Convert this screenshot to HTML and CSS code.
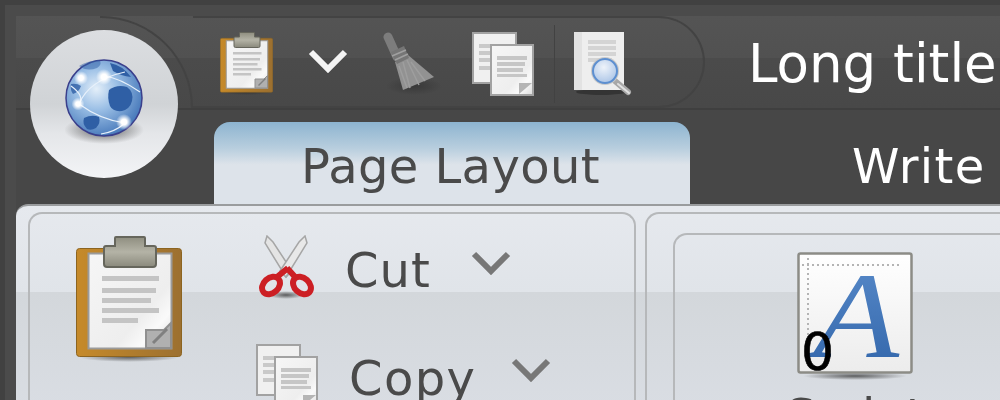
FILE: index.html
```html
<!DOCTYPE html>
<html lang="en">
<head>
  <meta charset="UTF-8">
  <title>Long title</title>
  <link rel="stylesheet" href="styles.css">
</head>
<body>
  <svg class="defs" width="0" height="0">
    <defs>
      <linearGradient id="board" x1="0" y1="0" x2="1" y2="0">
        <stop offset="0" stop-color="#c68a2a"/>
        <stop offset="1" stop-color="#9c7030"/>
      </linearGradient>
      <linearGradient id="paper" x1="0" y1="0" x2="1" y2="1">
        <stop offset="0" stop-color="#f6f6f6"/>
        <stop offset="0.65" stop-color="#eeeeee"/>
        <stop offset="0.8" stop-color="#fafafa"/>
        <stop offset="1" stop-color="#dcdcdc"/>
      </linearGradient>
      <linearGradient id="clip" x1="0" y1="0" x2="0" y2="1">
        <stop offset="0" stop-color="#8f8e80"/>
        <stop offset="0.5" stop-color="#b4b3a6"/>
        <stop offset="1" stop-color="#8a897c"/>
      </linearGradient>
      <linearGradient id="ink" x1="0" y1="0" x2="0" y2="1">
        <stop offset="0" stop-color="#5a8ccb"/>
        <stop offset="1" stop-color="#2f63a8"/>
      </linearGradient>
      <linearGradient id="sheet" x1="0" y1="0" x2="0" y2="1">
        <stop offset="0" stop-color="#ffffff"/>
        <stop offset="1" stop-color="#ececec"/>
      </linearGradient>
      <radialGradient id="sea" cx="0.4" cy="0.38" r="0.68">
        <stop offset="0" stop-color="#e4eff9"/>
        <stop offset="0.4" stop-color="#9cc0e6"/>
        <stop offset="1" stop-color="#3f72b6"/>
      </radialGradient>
      <radialGradient id="drop">
        <stop offset="0" stop-color="#333333" stop-opacity="0.75"/>
        <stop offset="1" stop-color="#333333" stop-opacity="0"/>
      </radialGradient>
      <radialGradient id="lens" cx="0.45" cy="0.35" r="0.7">
        <stop offset="0" stop-color="#eef3fa"/>
        <stop offset="1" stop-color="#a9c3e6"/>
      </radialGradient>
      <radialGradient id="spark">
        <stop offset="0.35" stop-color="#ffffff"/>
        <stop offset="1" stop-color="#ffffff" stop-opacity="0"/>
      </radialGradient>

      <symbol id="i-clipboard" viewBox="0 0 106 126">
        <ellipse cx="53" cy="121" rx="50" ry="5" fill="url(#drop)"/>
        <rect x="0.5" y="12.5" width="105" height="108" rx="3" fill="url(#board)" stroke="#8c6420"/>
        <rect x="12.5" y="17.5" width="83" height="95" fill="url(#paper)" stroke="#9a9a9a" stroke-width="2"/>
        <path d="M39 10V2q0-1 1-1h28q1 0 1 1v8h9q2 0 2 2v16q0 3-3 3H31q-3 0-3-3V12q0-2 2-2z" fill="url(#clip)" stroke="#66665c" stroke-width="2"/>
        <g fill="#c4c4c4">
          <rect x="26" y="40" width="57" height="5"/>
          <rect x="26" y="52" width="54" height="5"/>
          <rect x="26" y="62" width="49" height="5"/>
          <rect x="26" y="72" width="57" height="5"/>
          <rect x="26" y="82" width="36" height="5"/>
        </g>
        <path d="M70 94h18l7-7v25H70z" fill="#b0b0b0" stroke="#909090" stroke-width="2"/>
        <path d="M77 107l14-14" stroke="#808080" stroke-width="3"/>
      </symbol>

      <symbol id="i-copy" viewBox="0 0 62 64">
        <rect x="1" y="1" width="43" height="50" fill="#f0f0f0" stroke="#a2a2a2" stroke-width="2"/>
        <g fill="#c9c9c9">
          <rect x="7" y="12" width="12" height="4"/>
          <rect x="7" y="19" width="12" height="4"/>
          <rect x="7" y="26" width="12" height="4"/>
          <rect x="7" y="34" width="12" height="4"/>
        </g>
        <rect x="19" y="13" width="42" height="50" fill="url(#paper)" stroke="#a2a2a2" stroke-width="2"/>
        <g fill="#c6c6c6">
          <rect x="25" y="24" width="30" height="4"/>
          <rect x="25" y="30" width="28" height="4"/>
          <rect x="25" y="36" width="26" height="4"/>
          <rect x="25" y="42" width="30" height="3"/>
        </g>
        <path d="M47 62V51h13z" fill="#b5b5b5"/>
      </symbol>

      <symbol id="i-broom" viewBox="0 0 60 64">
        <ellipse cx="32" cy="54" rx="28" ry="9" fill="url(#drop)"/>
        <path d="M6 5l9 20" stroke="#7d7d7d" stroke-width="9" stroke-linecap="round"/>
        <path d="M13 30l13-7 26 22-31 13z" fill="#929292"/>
        <path d="M21 30l7 26M25 28l12 25M29 30l14 19M17 34l8 22" stroke="#9e9e9e" stroke-width="1.5"/>
        <path d="M9 20l13-6 5 12-12 6z" fill="#767676"/>
        <path d="M10 24l14-6M13 28l13-6" stroke="#a0a0a0" stroke-width="1.5"/>
      </symbol>

      <symbol id="i-preview" viewBox="0 0 58 64">
        <ellipse cx="27" cy="60" rx="25" ry="3" fill="#2c2c2c" opacity="0.7"/>
        <rect x="0" y="0" width="50" height="58" fill="#eeeeee"/>
        <rect x="0" y="0" width="8" height="58" fill="#e2e2e2"/>
        <g fill="#d4d4d4">
          <rect x="14" y="8" width="28" height="4"/>
          <rect x="14" y="14" width="28" height="4"/>
          <rect x="14" y="20" width="28" height="4"/>
          <rect x="14" y="26" width="24" height="4"/>
        </g>
        <path d="M41 49l13 11" stroke="#a8a8a8" stroke-width="6" stroke-linecap="round"/>
        <path d="M44 52l11 9" stroke="#e0e0e0" stroke-width="2" stroke-linecap="round"/>
        <circle cx="31" cy="39" r="14" fill="#c9c9c9"/>
        <circle cx="31" cy="39" r="12" fill="url(#lens)" stroke="#5d8fd0" stroke-width="2"/>
      </symbol>

      <symbol id="i-scissors" viewBox="0 0 56 64">
        <ellipse cx="27" cy="60" rx="18" ry="4" fill="url(#drop)"/>
        <path d="M8 1l6 6 19 29-6 6L6 8z" fill="#e4e4e4" stroke="#a6a6a6" stroke-width="1.5"/>
        <path d="M46 1l-6 6-19 29 6 6L48 8z" fill="#e8e8e8" stroke="#a6a6a6" stroke-width="1.5"/>
        <g fill="none" stroke="#cc1f24" stroke-width="6">
          <ellipse cx="12" cy="50.5" rx="10" ry="7.5" transform="rotate(-42 12 50.5)"/>
          <ellipse cx="43" cy="50.5" rx="10" ry="7.5" transform="rotate(42 43 50.5)"/>
          <path d="M18 42l11-9M37 43l-9-10"/>
        </g>
      </symbol>
    </defs>
  </svg>

  <div class="window">
    <div class="inner">
      <header class="titlebar">
        <div class="corner"></div>
        <div class="quick">
          <svg class="icon-clipboard-sm"><use href="#i-clipboard"/></svg>
          <svg class="chevron chevron-white" viewBox="0 0 40 24"><path d="M3 3l17 17L37 3"/></svg>
          <svg class="icon-broom"><use href="#i-broom"/></svg>
          <svg class="icon-copy quick-copy"><use href="#i-copy"/></svg>
          <div class="quick-sep"></div>
          <svg class="icon-preview"><use href="#i-preview"/></svg>
        </div>
        <div class="title">Long title</div>
      </header>

      <nav class="tabs">
        <div class="tab active">Page Layout</div>
        <div class="tab">Write</div>
      </nav>

      <main class="ribbon">
        <section class="group group-clipboard">
          <svg class="icon-clipboard"><use href="#i-clipboard"/></svg>
          <div class="actions">
            <div class="action action-cut">
              <svg class="icon-scissors"><use href="#i-scissors"/></svg>
              <span class="label">Cut</span>
              <svg class="chevron" viewBox="0 0 40 24"><path d="M3 3l17 17L37 3"/></svg>
            </div>
            <div class="action action-copy">
              <svg class="icon-copy"><use href="#i-copy"/></svg>
              <span class="label">Copy</span>
              <svg class="chevron" viewBox="0 0 40 24"><path d="M3 3l17 17L37 3"/></svg>
            </div>
          </div>
        </section>
        <section class="group group-page">
          <div class="subgroup">
            <div class="tool">
              <div class="tool-icon">
                <svg class="icon-font" viewBox="0 0 116 128">
                  <ellipse cx="58" cy="124" rx="52" ry="4" fill="url(#drop)"/>
                  <rect x="1.5" y="1.5" width="113" height="119" rx="2" fill="url(#sheet)" stroke="#8c8c86" stroke-width="2.5"/>
                  <path d="M5 13H104" stroke="#b4b4b4" stroke-width="2" stroke-dasharray="2 3"/>
                  <path d="M11 6V88" stroke="#b4b4b4" stroke-width="2" stroke-dasharray="2 3"/>
                  <text class="font-a" x="16" y="105" textLength="86" lengthAdjust="spacingAndGlyphs" fill="url(#ink)">A</text>
                </svg>
                <span class="badge">0</span>
              </div>
              <span class="label">Script</span>
            </div>
          </div>
        </section>
      </main>
    </div>

    <div class="app-button">
      <svg class="globe" viewBox="0 0 80 92">
        <ellipse cx="39" cy="72" rx="40" ry="14" fill="url(#drop)"/>
        <circle cx="39" cy="40" r="38" fill="url(#sea)" stroke="#3a3f8c" stroke-width="1.5"/>
        <g fill="#2f5fa5">
          <path d="M44 32q8-6 18-3 7 5 5 14-2 8-10 10-9 1-12-5-3-8-1-16z"/>
          <path d="M19 60q8-4 15-1 2 6-3 11-5 3-9 1-5-5-3-11z"/>
          <path d="M45 5q12 2 21 14-10-1-18-6z"/>
          <path d="M6 26q6-1 10 2-2 6-8 8-3-4-2-10z" opacity="0.8"/>
          <path d="M14 8q8-5 20-6 4 4-2 8-10 4-18-2z" opacity="0.5"/>
        </g>
        <g fill="none" stroke="#e8f1fb" stroke-width="1.2">
          <path d="M14 46Q24 22 60 14"/>
          <path d="M14 46q22 16 46 19"/>
          <path d="M39 18q16 2 36 16"/>
          <path d="M6 28q14 10 8 18"/>
          <path d="M36 76q14-2 24-11"/>
        </g>
        <circle cx="16" cy="20" r="7" fill="url(#spark)"/>
        <circle cx="39" cy="19" r="8" fill="url(#spark)"/>
        <circle cx="13" cy="46" r="6.5" fill="url(#spark)"/>
        <circle cx="59" cy="64" r="8" fill="url(#spark)"/>
      </svg>
    </div>
  </div>
</body>
</html>
```

FILE: styles.css
```css
/* General Styles */
html, body {
  margin: 0;
  height: 100%;
  overflow: hidden;
}

body {
  background-color: #414141;
  font-family: "DejaVu Sans", sans-serif;
  font-size: 48px;
}

.defs {
  position: absolute;
}

svg {
  display: block;
  flex: none;
}

/* the whole shot is slightly soft, it was scaled up */
.window {
  position: relative;
  width: 995px;
  height: 395px;
  margin: 5px 0 0 5px;
  padding: 11px 0 0 11px;
  box-sizing: border-box;
  background-color: #4b4b4b;
  overflow: hidden;
  filter: blur(0.5px);
}

.inner {
  height: 100%;
  background-color: #474747;
}

/* Title bar */
.titlebar {
  display: flex;
  height: 92px;
  border-bottom: 2px solid #3f3f3f;
  background: linear-gradient(#545454, #515151 46%, #4b4b4b 46%, #484848);
}

.corner {
  flex: none;
  width: 93px;
  height: 92px;
  margin-left: 84px;
  border-top: 2px solid #434343;
  border-right: 2px solid #434343;
  border-top-right-radius: 92px;
  box-sizing: border-box;
}

.quick {
  flex: none;
  display: flex;
  align-items: flex-start;
  width: 512px;
  height: 92px;
  border: 2px solid #434343;
  border-left: none;
  border-radius: 0 46px 46px 0;
  box-sizing: border-box;
}

.icon-clipboard-sm {
  width: 53px;
  height: 63px;
  margin: 14px 0 0 27px;
}

.chevron {
  width: 40px;
  height: 24px;
}

.chevron path {
  fill: none;
  stroke: #777777;
  stroke-width: 6;
}

.chevron-white {
  margin: 31px 0 0 35px;
}

.chevron-white path {
  stroke: #f4f4f4;
}

.icon-broom {
  width: 60px;
  height: 64px;
  margin: 14px 0 0 34px;
}

.icon-copy {
  width: 62px;
  height: 64px;
}

.quick-copy {
  margin: 14px 0 0 30px;
}

.quick-sep {
  width: 1px;
  height: 78px;
  margin: 7px 0 0 20px;
  background-color: #424242;
}

.icon-preview {
  width: 58px;
  height: 64px;
  margin: 14px 0 0 19px;
}

.title {
  margin: 16px 0 0 43px;
  font-size: 53px;
  line-height: 64px;
  color: #ffffff;
  white-space: nowrap;
}

/* App button lies over the title bar and tab row */
.app-button {
  position: absolute;
  left: 25px;
  top: 25px;
  width: 148px;
  height: 148px;
  border-radius: 50%;
  background: linear-gradient(#dcdee1, #d0d3d6 50%, #e4e6e9 70%, #f3f4f6);
  display: flex;
  justify-content: center;
  padding: 28px 0 0 2px;
  box-sizing: border-box;
}

.globe {
  width: 80px;
  height: 92px;
}

/* Tabs */
.tabs {
  display: flex;
  height: 82px;
  margin: 0 0 0 198px;
  padding-top: 12px;
  font-size: 48px;
}

.tab {
  color: #ffffff;
  line-height: 88px;
  margin-left: 162px;
  letter-spacing: 1.4px;
}

.tab.active {
  margin-left: 0;
  width: 476px;
  height: 82px;
  padding-left: 87px;
  box-sizing: border-box;
  border-radius: 16px 16px 0 0;
  background: linear-gradient(#8db4d0, #b8cede 32%, #dde3ea 52%, #dde3ea);
  color: #4a4a4a;
  letter-spacing: 0.4px;
}

/* Ribbon */
.ribbon {
  display: flex;
  gap: 9px;
  height: 220px;
  padding: 6px 0 0 12px;
  border-top: 2px solid #9a9c9e;
  border-top-left-radius: 12px;
  background: linear-gradient(#e6e9ee, #e0e4e9 86px, #d3d7db 86px, #d9dde3 200px);
  box-sizing: border-box;
  color: #4a4a4a;
}

.group {
  flex: none;
  height: 300px;
  border: 2px solid #b6b8ba;
  border-bottom: none;
  border-radius: 14px 14px 0 0;
  box-sizing: border-box;
}

.group-clipboard {
  display: flex;
  width: 608px;
  padding: 22px 0 0 46px;
  gap: 74px;
}

.icon-clipboard {
  width: 106px;
  height: 126px;
}

.actions {
  display: flex;
  flex-direction: column;
  gap: 46px;
}

.action {
  display: flex;
  align-items: center;
}

.action-cut {
  margin-left: 3px;
  height: 62px;
  gap: 30px;
}

.action-cut .chevron {
  margin: -8px 0 0 10px;
}

.action-copy {
  height: 64px;
  gap: 31px;
}

.action-copy .chevron {
  margin: -12px 0 0 4px;
}

.icon-scissors {
  width: 56px;
  height: 64px;
}

.label {
  line-height: 56px;
  white-space: nowrap;
}

.action-cut .label {
  margin-top: 6px;
  letter-spacing: 1px;
}

.action-copy .label {
  margin-top: 4px;
  letter-spacing: 1.4px;
}

.group-page {
  flex: 1;
  margin-right: -20px;
  padding: 19px 0 0 26px;
  border-right: none;
}

.subgroup {
  height: 280px;
  padding: 17px 0 0 122px;
  border: 2px solid #b6b8ba;
  border-right: none;
  border-top-left-radius: 14px;
  box-sizing: border-box;
}

.tool {
  display: flex;
  flex-direction: column;
  align-items: center;
  width: 116px;
}

.tool-icon {
  position: relative;
}

.icon-font {
  width: 116px;
  height: 128px;
}

.font-a {
  font-family: "Liberation Serif", serif;
  font-style: italic;
  font-size: 122px;
}

.tool .label {
  margin-top: 8px;
}

.badge {
  position: absolute;
  left: 4px;
  top: 70px;
  font-size: 52px;
  line-height: 60px;
  color: #000000;
  -webkit-text-stroke: 0.6px #000000;
}
```
